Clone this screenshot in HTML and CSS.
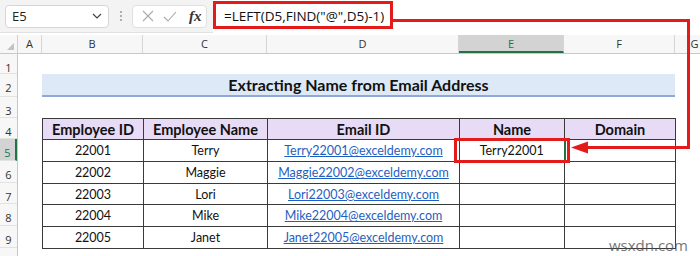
FILE: index.html
```html
<!DOCTYPE html>
<html lang="en">
<head>
  <meta charset="UTF-8" />
  <title>Extracting Name from Email Address</title>
  <link rel="stylesheet" href="styles.css">
</head>
<body>

  <div class="toolbar">
    <div class="name-box">
      <span>E5</span>
      <svg class="chevron" width="10" height="6" viewBox="0 0 10 6"><path d="M1 1 L5 5 L9 1" fill="none" stroke="#444" stroke-width="1.2"/></svg>
    </div>
    <div class="grip"><i></i><i></i><i></i></div>
    <div class="fx-box">
      <svg width="12" height="12" viewBox="0 0 12 12"><path d="M1 1 L11 11 M11 1 L1 11" stroke="#aaa" stroke-width="1.1"/></svg>
      <svg width="14" height="11" viewBox="0 0 14 11"><path d="M1 6 L5 10 L13 1" fill="none" stroke="#aaa" stroke-width="1.1"/></svg>
      <span class="fx">fx</span>
    </div>
    <div class="formula">=LEFT(D5,FIND("@",D5)-1)</div>
  </div>

  <div class="sheet">
    <div class="corner"><span class="tri"></span></div>

    <div class="col-heads">
      <div class="ch w-a">A</div>
      <div class="ch w-b">B</div>
      <div class="ch w-c">C</div>
      <div class="ch w-d">D</div>
      <div class="ch w-e active">E</div>
      <div class="ch w-f">F</div>
      <div class="ch w-g">G</div>
    </div>

    <div class="row-heads">
      <div class="rh r1">1</div>
      <div class="rh r2">2</div>
      <div class="rh r3">3</div>
      <div class="rh r4">4</div>
      <div class="rh r5 active">5</div>
      <div class="rh r6">6</div>
      <div class="rh r7">7</div>
      <div class="rh r8">8</div>
      <div class="rh r9">9</div>
      <div class="rh r10"></div>
    </div>

    <div class="body">
      <div class="r1"></div>
      <div class="title r2">Extracting Name from Email Address</div>
      <div class="r3"></div>
      <table class="data">
        <colgroup>
          <col class="w-b"><col class="w-c"><col class="w-d"><col class="w-e"><col class="w-f">
        </colgroup>
        <tr class="head r4">
          <th>Employee ID</th><th>Employee Name</th><th>Email ID</th><th>Name</th><th>Domain</th>
        </tr>
        <tr class="r5">
          <td>22001</td><td>Terry</td><td><a>Terry22001@exceldemy.com</a></td><td class="cur">Terry22001</td><td></td>
        </tr>
        <tr class="r6">
          <td>22002</td><td>Maggie</td><td><a>Maggie22002@exceldemy.com</a></td><td></td><td></td>
        </tr>
        <tr class="r7">
          <td>22003</td><td>Lori</td><td><a>Lori22003@exceldemy.com</a></td><td></td><td></td>
        </tr>
        <tr class="r8">
          <td>22004</td><td>Mike</td><td><a>Mike22004@exceldemy.com</a></td><td></td><td></td>
        </tr>
        <tr class="r9">
          <td>22005</td><td>Janet</td><td><a>Janet22005@exceldemy.com</a></td><td></td><td></td>
        </tr>
      </table>
    </div>
  </div>

  <!-- callout drawn over the sheet -->
  <svg class="callout" width="700" height="256" viewBox="0 0 700 256">
    <rect x="214.5" y="2.5" width="177" height="25" fill="none" stroke="#e31b1b" stroke-width="3"/>
    <rect x="455.5" y="139.5" width="113" height="22" fill="none" stroke="#e31b1b" stroke-width="3"/>
    <path d="M392 20.5 H688.5 V147.5 H586" fill="none" stroke="#e31b1b" stroke-width="3"/>
    <path d="M571 147.5 L588 141.5 L588 153.5 Z" fill="#e31b1b"/>
  </svg>

  <div class="watermark">wsxdn.com</div>

</body>
</html>
```

FILE: styles.css
```css
* {
  margin: 0;
  padding: 0;
  box-sizing: border-box;
}

body {
  width: 700px;
  height: 256px;
  overflow: hidden;
  background: white;
  font-family: 'Open Sans', 'Noto Sans', sans-serif;
  position: relative;
}

/* formula bar */
.toolbar {
  height: 33px;
  background: #f3f3f3;
  display: flex;
  align-items: center;
  border-bottom: 1px solid #e1e1e1;
}

.name-box {
  width: 104px;
  height: 23px;
  margin-left: 5px;
  background: white;
  border: 1px solid #d6d6d6;
  border-radius: 4px;
  display: flex;
  align-items: center;
  justify-content: space-between;
  padding: 0 6px 0 6px;
  font-size: 13px;
  color: #222;
}

.grip {
  width: 23px;
  display: flex;
  flex-direction: column;
  align-items: center;
  gap: 2px;
}

.grip i {
  width: 2px;
  height: 2px;
  background: #999;
  border-radius: 1px;
}

.fx-box {
  width: 75px;
  height: 23px;
  background: white;
  border: 1px solid #e0e0e0;
  border-radius: 4px;
  display: flex;
  align-items: center;
  gap: 9px;
  padding-left: 9px;
}

.fx {
  font-family: 'Liberation Serif', serif;
  font-style: italic;
  font-weight: bold;
  font-size: 15px;
  color: #333;
  margin-left: 3px;
}

.formula {
  flex: 1;
  height: 33px;
  margin-left: 6px;
  background: white;
  display: flex;
  align-items: center;
  padding-left: 11px;
  font-size: 13.5px;
  color: #111;
}

/* sheet grid */
.sheet {
  display: grid;
  grid-template-columns: 18px 1fr;
  grid-template-rows: 19px 1fr;
  margin-top: 2px;
}

.corner {
  background: #f7f7f7;
  border-right: 1px solid #d0d0d0;
  border-bottom: 1px solid #c8c8c8;
  position: relative;
}

.tri {
  position: absolute;
  right: 3px;
  bottom: 3px;
  width: 0;
  height: 0;
  border-left: 7px solid transparent;
  border-bottom: 7px solid #c2c2c2;
}

.col-heads {
  display: flex;
  background: #f7f7f7;
  border-bottom: 1px solid #c8c8c8;
}

.ch {
  font-size: 11px;
  color: #333;
  text-align: center;
  line-height: 18px;
  border-right: 1px solid #d6d6d6;
  flex-shrink: 0;
}

.ch.active {
  background: #d3d3d3;
  border-bottom: 2px solid #217346;
  color: #217346;
}

.w-a { width: 24px; }
.w-b { width: 101px; }
.w-c { width: 124px; }
.w-d { width: 192px; }
.w-e { width: 105px; }
.w-f { width: 111px; }
.w-g { width: 40px; }

.row-heads {
  display: flex;
  flex-direction: column;
  background: #f7f7f7;
  border-right: 1px solid #c8c8c8;
}

.rh {
  font-size: 11px;
  color: #333;
  text-align: center;
  padding-top: 6px;
  border-bottom: 1px solid #e2e2e2;
}

.rh.active {
  background: #d3d3d3;
  border-right: 2px solid #217346;
  color: #217346;
}

.r1 { height: 20px; }
.r2 { height: 23px; }
.r3 { height: 21px; }
.r4 { height: 21px; }
.r5 { height: 22px; }
.r6 { height: 22px; }
.r7 { height: 21px; }
.r8 { height: 22px; }
.r9 { height: 22px; }
.r10 { height: 20px; }

.body {
  padding-left: 24px;
  font-family: 'Lato', 'Carlito', sans-serif;
}

.title {
  width: 633px;
  background: #dde9f6;
  border-bottom: 2px solid #8fa9d6;
  text-align: center;
  font-weight: bold;
  font-size: 16px;
  line-height: 22px;
  color: #111;
}

.data {
  border-collapse: collapse;
  table-layout: fixed;
  width: 633px;
  font-size: 12.5px;
  color: #111;
}

.data th,
.data td {
  border: 1px solid #3a3a3a;
  text-align: center;
  padding: 0;
  white-space: nowrap;
  overflow: hidden;
}

.data th {
  background: #e7dbf6;
  font-weight: bold;
  font-size: 14.5px;
}

.data a {
  color: #1f5fc1;
  text-decoration: underline;
}

.data td.cur {
  border-right: 2px solid #217346;
}

.callout {
  position: absolute;
  left: 0;
  top: 0;
  pointer-events: none;
}

.watermark {
  position: absolute;
  right: 12px;
  bottom: 1px;
  font-size: 15px;
  color: #555;
  opacity: 0.8;
}
```
